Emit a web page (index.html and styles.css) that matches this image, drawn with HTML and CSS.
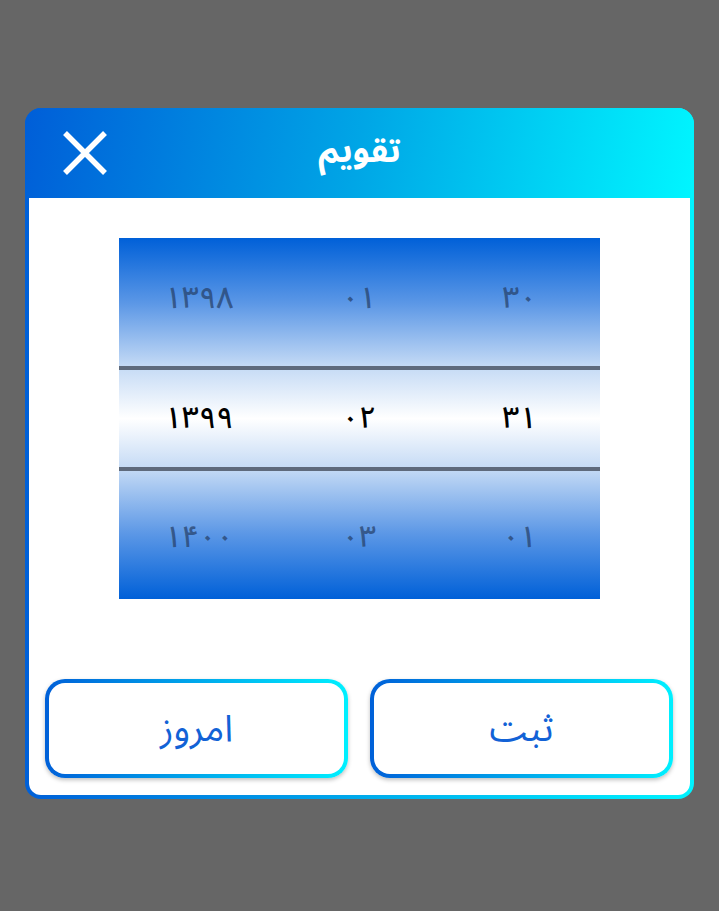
FILE: index.html
```html
<!DOCTYPE html>
<html lang="fa">
<head>
<meta charset="utf-8">
<link rel="stylesheet" href="styles.css">
</head>
<body>
<div class="stage">
  <div class="dialog">
    <div class="header">
      <button class="close" aria-label="close">
        <svg width="46" height="46" viewBox="0 0 46 46"><path d="M3 3 L43 43 M43 3 L3 43" stroke="#fff" stroke-width="5.5" stroke-linecap="butt"/></svg>
      </button>
      <div class="title">تقویم</div>
    </div>
    <div class="body">
      <div class="picker">
        <div class="row faded">
          <span>۱۳۹۸</span><span>۰۱</span><span>۳۰</span>
        </div>
        <div class="row selected">
          <span>۱۳۹۹</span><span>۰۲</span><span>۳۱</span>
        </div>
        <div class="row faded">
          <span>۱۴۰۰</span><span>۰۳</span><span>۰۱</span>
        </div>
      </div>
      <div class="actions">
        <div class="btn"><div class="btn-inner">امروز</div></div>
        <div class="btn"><div class="btn-inner">ثبت</div></div>
      </div>
    </div>
  </div>
</div>
</body>
</html>
```
FILE: styles.css
```css
html, body {
  margin: 0;
  padding: 0;
  background: #666666;
  width: 719px;
  height: 911px;
  font-family: "Noto Sans Arabic", "Noto Naskh Arabic", "DejaVu Sans", "Noto Sans", sans-serif;
}
.stage {
  padding: 108px 25px 0 25px;
}
.dialog {
  width: 669px;
  height: 691px;
  border-radius: 16px;
  background: linear-gradient(90deg, #0060d8 0%, #00f4ff 100%);
  padding: 0 4px 4px 4px;
  box-sizing: border-box;
  display: flex;
  flex-direction: column;
}
.header {
  height: 90px;
  margin: 0 -4px;
  border-radius: 16px 16px 0 0;
  background: linear-gradient(100deg, #005ed8 0%, #00a6e6 50%, #00f6ff 100%);
  display: flex;
  align-items: center;
  justify-content: center;
  position: relative;
}
.close {
  position: absolute;
  left: 37px;
  top: 22px;
  width: 46px;
  height: 46px;
  padding: 0;
  border: 0;
  background: none;
  display: block;
}
.close svg { display: block; }
.title {
  color: #fff;
  font-size: 34px;
  font-weight: bold;
  margin-top: -4px;
}
.body {
  flex: 1;
  background: #fff;
  border-radius: 0 0 12px 12px;
  display: flex;
  flex-direction: column;
  align-items: center;
  padding-top: 40px;
}
.picker {
  width: 481px;
  height: 361px;
  background: linear-gradient(180deg, #0060d8 0%, #5b97e6 18%, #c4daf5 35.5%, #ffffff 50%, #c4daf5 64%, #5b97e6 82%, #0060d8 100%);
  display: flex;
  flex-direction: column;
}
.row {
  display: grid;
  grid-template-columns: 160px 160px 161px;
  align-items: center;
  justify-items: center;
  font-size: 30px;
  font-weight: 500;
}
.row span { direction: ltr; }
.faded {
  height: 128px;
  color: rgba(38, 64, 104, 0.72);
}
.faded:first-child span { margin-top: -8px; }
.faded:last-child span { margin-top: 4px; }
.selected {
  height: 97px;
  color: #000;
  border-top: 4px solid #5e6a7c;
  border-bottom: 4px solid #5e6a7c;
}
.actions {
  margin-top: 80px;
  width: 100%;
  box-sizing: border-box;
  padding: 0 17px 0 16px;
  display: flex;
  gap: 22px;
}
.btn {
  flex: 1;
  height: 99px;
  border-radius: 20px;
  padding: 4px;
  box-sizing: border-box;
  background: linear-gradient(90deg, #0060d8 0%, #00f0ff 100%);
  box-shadow: 0 2px 4px rgba(0, 0, 0, 0.25);
}
.btn-inner {
  height: 100%;
  border-radius: 16px;
  background: #fff;
  display: flex;
  align-items: center;
  justify-content: center;
  color: #1262d6;
  font-size: 37px;
}
```
